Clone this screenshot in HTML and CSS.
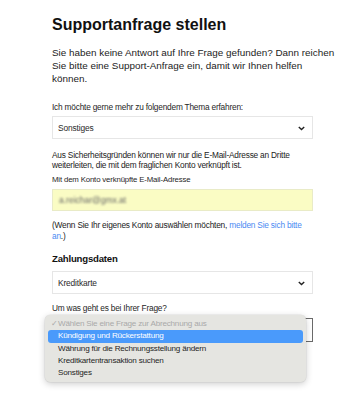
FILE: index.html
```html
<!DOCTYPE html>
<html lang="de">
<head>
<meta charset="utf-8">
<link rel="stylesheet" href="styles.css">
</head>
<body>
<main class="page">
  <h1 class="title">Supportanfrage stellen</h1>
  <p class="intro">Sie haben keine Antwort auf Ihre Frage gefunden? Dann reichen Sie bitte eine Support-Anfrage ein, damit wir Ihnen helfen<br>können.</p>

  <label class="label topic-label">Ich möchte gerne mehr zu folgendem Thema erfahren:</label>
  <div class="select">
    <span>Sonstiges</span>
    <svg class="chev" width="7" height="5" viewBox="0 0 7 5"><path d="M0.8 1l2.7 2.6L6.2 1" fill="none" stroke="#222" stroke-width="1.4"/></svg>
  </div>

  <p class="note">Aus Sicherheitsgründen können wir nur die E-Mail-Adresse an Dritte weiterleiten, die mit dem fraglichen Konto verknüpft ist.</p>
  <label class="label small">Mit dem Konto verknüpfte E-Mail-Adresse</label>
  <div class="email"><span class="blur">a.reichar@gmx.at</span></div>
  <p class="login">(Wenn Sie Ihr eigenes Konto auswählen möchten, <a href="#">melden Sie sich bitte an</a>.)</p>

  <h2 class="subtitle">Zahlungsdaten</h2>
  <div class="select pay">
    <span>Kreditkarte</span>
    <svg class="chev" width="7" height="5" viewBox="0 0 7 5"><path d="M0.8 1l2.7 2.6L6.2 1" fill="none" stroke="#222" stroke-width="1.4"/></svg>
  </div>

  <label class="label question">Um was geht es bei Ihrer Frage?</label>
  <div class="select-wrap">
    <div class="select focused"></div>
    <ul class="menu">
      <li class="opt disabled"><span class="check">✓</span>Wählen Sie eine Frage zur Abrechnung aus</li>
      <li class="opt active">Kündigung und Rückerstattung</li>
      <li class="opt">Währung für die Rechnungsstellung ändern</li>
      <li class="opt">Kreditkartentransaktion suchen</li>
      <li class="opt">Sonstiges</li>
    </ul>
  </div>
</main>
</body>
</html>
```
FILE: styles.css
```css
* { box-sizing: border-box; }
html, body { margin: 0; padding: 0; background: #fff; }
body { min-height: 400px; font-family: "Liberation Sans", Arial, sans-serif; color: #222; }
.page { width: 261px; margin-left: 52px; padding-top: 15px; display: flex; flex-direction: column; }
.title { margin: 0; font-weight: bold; font-size: 16px; line-height: 20px; color: #111; }
.intro { margin: 10.5px 0 0; width: 290px; font-size: 9.9px; line-height: 13.4px; color: #222; }
.label { display: block; font-size: 8.3px; letter-spacing: -0.2px; line-height: 11px; color: #262626; }
.topic-label { margin-top: 16.5px; }
.select { margin-top: 3px; height: 23px; border: 1px solid #e6e6e6; display: flex; align-items: center; justify-content: space-between; padding: 0 7px 0 5px; font-size: 8.4px; letter-spacing: -0.15px; color: #2a2a2a; flex-shrink: 0; }
.chev { margin-top: 1px; }
.note { margin: 10.5px 0 0; font-size: 8.3px; letter-spacing: -0.2px; line-height: 10.5px; color: #222; }
.small { margin-top: 4.5px; font-size: 7.8px; letter-spacing: -0.15px; line-height: 10px; }
.email { margin-top: 4px; height: 22px; background: #fafcc4; border: 1px solid #e9ebc7; display: flex; align-items: center; padding-left: 6px; flex-shrink: 0; }
.blur { font-size: 8.5px; color: #666; filter: blur(1.3px); }
.login { margin: 8.3px 0 0; font-size: 8.3px; letter-spacing: -0.2px; line-height: 11.3px; color: #222; }
.login a { color: #4a8af2; text-decoration: none; }
.subtitle { margin: 10px 0 0; font-weight: bold; font-size: 9.6px; letter-spacing: -0.2px; line-height: 14px; color: #111; }
.select.pay { margin-top: 5px; }
.question { margin-top: 8.5px; font-size: 8.3px; }
.select-wrap { position: relative; margin-top: 4.5px; }
.select.focused { margin-top: 0; height: 24px; border: 1px solid #6a6a6a; }
.menu { position: absolute; left: -7px; top: -3px; width: 261px; margin: 0; padding: 3px 3px 2px; list-style: none; background: #e5e5e1; border-radius: 5px; box-shadow: 0 2px 7px rgba(0,0,0,0.2), 0 0 0 0.5px rgba(0,0,0,0.08); font-size: 8.1px; letter-spacing: -0.2px; color: #1f1f1f; }
.opt { height: 12.3px; line-height: 12.3px; padding-left: 10px; white-space: nowrap; }
.opt.disabled { color: #a9a9a9; padding-left: 2.5px; }
.check { display: inline-block; width: 7.5px; }
.opt.active { background: #4a9afb; color: #fff; border-radius: 3px; }
```
